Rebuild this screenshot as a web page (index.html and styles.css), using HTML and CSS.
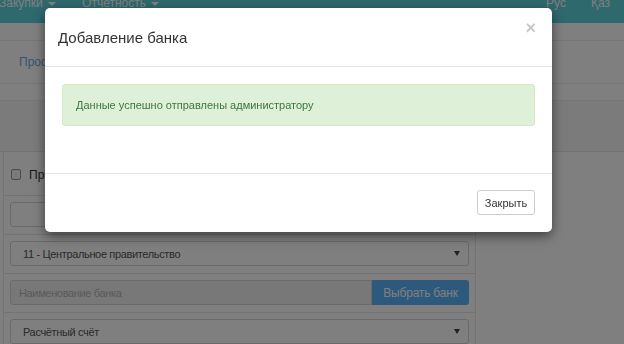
FILE: index.html
```html
<!doctype html>
<html lang="ru">
  <head>
    <meta charset="utf-8">
    <title>Добавление банка</title>
    <link rel="stylesheet" href="styles.css">
  </head>
  <body>

    <nav class="topbar">
      <div class="menu">
        <span class="menu-item">Закупки <i class="caret"></i></span>
        <span class="menu-item">Отчетность <i class="caret"></i></span>
      </div>
      <div class="langs">
        <span>Рус</span>
        <span>Қаз</span>
      </div>
    </nav>

    <div class="gap"></div>
    <div class="tabs"><a class="tab">Профиль</a></div>
    <div class="strip"></div>
    <div class="toolbar"></div>

    <main class="panel">
      <div class="row row-check">
        <span class="check"></span> Признак
      </div>
      <div class="row">
        <div class="field"></div>
      </div>
      <div class="row">
        <div class="field select">11 - Центральное правительство <i class="arrow"></i></div>
      </div>
      <div class="row">
        <div class="group">
          <div class="field readonly">Наименование банка</div>
          <button type="button" class="btn-blue">Выбрать банк</button>
        </div>
      </div>
      <div class="row">
        <div class="field select">Расчётный счёт <i class="arrow"></i></div>
      </div>
    </main>

    <div class="backdrop"></div>

    <div class="modal">
      <div class="modal-header">
        <h4 class="modal-title">Добавление банка</h4>
        <span class="close">&times;</span>
      </div>
      <div class="modal-body">
        <div class="alert">Данные успешно отправлены администратору</div>
      </div>
      <div class="modal-footer">
        <button type="button" class="btn">Закрыть</button>
      </div>
    </div>

  </body>
</html>
```

FILE: styles.css
```css
* {
  margin: 0;
  padding: 0;
  box-sizing: border-box;
}

body {
  font-family: "Liberation Sans", Arial, sans-serif;
  font-size: 12px;
  color: #555;
  background: #fff;
  height: 344px;
  overflow: hidden;
}

/* верхнее меню */
.topbar {
  height: 23px;
  background: #5cd2dc;
  color: #fff;
  display: flex;
  justify-content: space-between;
  font-size: 12px;
  line-height: 12px;
  overflow: hidden;
}
.menu, .langs {
  display: flex;
  margin-top: -3px;
}
.menu {
  gap: 26px;
  margin-left: -1px;
}
.langs {
  gap: 25px;
  margin-right: 14px;
}
.caret {
  display: inline-block;
  width: 0;
  height: 0;
  border-left: 4px solid transparent;
  border-right: 4px solid transparent;
  border-top: 4px solid #fff;
  vertical-align: middle;
  margin-left: 2px;
}

.gap {
  height: 18px;
  border-bottom: 1px solid #ececec;
}
.tabs {
  height: 43px;
  border-bottom: 1px solid #ececec;
  padding-left: 19px;
  display: flex;
  align-items: center;
}
.tab {
  color: #6aa8e8;
  font-size: 12px;
}
.strip {
  height: 17px;
  border-bottom: 1px solid #ececec;
}
.toolbar {
  height: 51px;
  background: #f6f6f6;
  border-bottom: 1px solid #e6e6e6;
}

/* форма */
.panel {
  margin-left: 3px;
  width: 473px;
  border-left: 1px solid #e6e6e6;
  border-right: 1px solid #e6e6e6;
}
.row {
  padding: 6px 6px 7px;
  border-bottom: 1px solid #e6e6e6;
}
.row-check {
  height: 44px;
  display: flex;
  align-items: center;
  gap: 8px;
  padding-left: 7px;
  padding-top: 9px;
  color: #333;
  font-size: 12px;
}
.check {
  width: 10px;
  height: 11px;
  border: 1px solid #9a9a9a;
  border-radius: 2px;
  background: #f4f4f4;
}
.field {
  height: 25px;
  border: 1px solid #d4d4d4;
  border-radius: 3px;
  background: #fff;
  padding: 0 12px;
  display: flex;
  align-items: center;
  color: #555;
  font-size: 11px;
  letter-spacing: -0.35px;
}
.select {
  justify-content: space-between;
  padding-right: 8px;
}
.arrow {
  width: 0;
  height: 0;
  border-left: 3px solid transparent;
  border-right: 3px solid transparent;
  border-top: 5px solid #444;
}
.group {
  display: flex;
}
.readonly {
  flex: 1;
  background: #f0f0f0;
  color: #b4b4b4;
  padding-left: 8px;
  border-radius: 3px 0 0 3px;
}
.btn-blue {
  width: 97px;
  height: 25px;
  border: none;
  border-radius: 0 3px 3px 0;
  background: #58b2f8;
  color: #fff;
  font-family: inherit;
  font-size: 12px;
  letter-spacing: -0.2px;
}

/* модальное окно */
.backdrop {
  position: fixed;
  inset: 0;
  background: rgba(0, 0, 0, .5);
}
.modal {
  position: absolute;
  left: 45px;
  top: 8px;
  width: 507px;
  height: 224px;
  background: #fff;
  border-radius: 5px;
  box-shadow: 0 4px 12px rgba(0, 0, 0, .5);
  display: flex;
  flex-direction: column;
  color: #333;
}
.modal-header {
  height: 59px;
  border-bottom: 1px solid #e5e5e5;
  padding: 0 15px 0 13px;
  display: flex;
  justify-content: space-between;
  align-items: center;
}
.modal-title {
  font-size: 15px;
  font-weight: normal;
  color: #333;
  margin-top: 1px;
}
.close {
  font-size: 18px;
  font-weight: bold;
  color: #c8c8c8;
  line-height: 1;
  margin-top: -19px;
  margin-right: 1px;
}
.modal-body {
  height: 107px;
  padding: 17px;
  border-bottom: 1px solid #e5e5e5;
}
.alert {
  height: 42px;
  background: #dff0d8;
  border: 1px solid #d6e9c6;
  border-radius: 3px;
  color: #3c763d;
  padding: 0 13px;
  display: flex;
  align-items: center;
  font-size: 11px;
}
.modal-footer {
  flex: 1;
  display: flex;
  justify-content: flex-end;
  align-items: flex-start;
  padding: 16px 17px 0;
}
.btn {
  width: 58px;
  height: 25px;
  background: #fff;
  border: 1px solid #ccc;
  border-radius: 3px;
  color: #333;
  font-family: inherit;
  font-size: 11px;
}
```
